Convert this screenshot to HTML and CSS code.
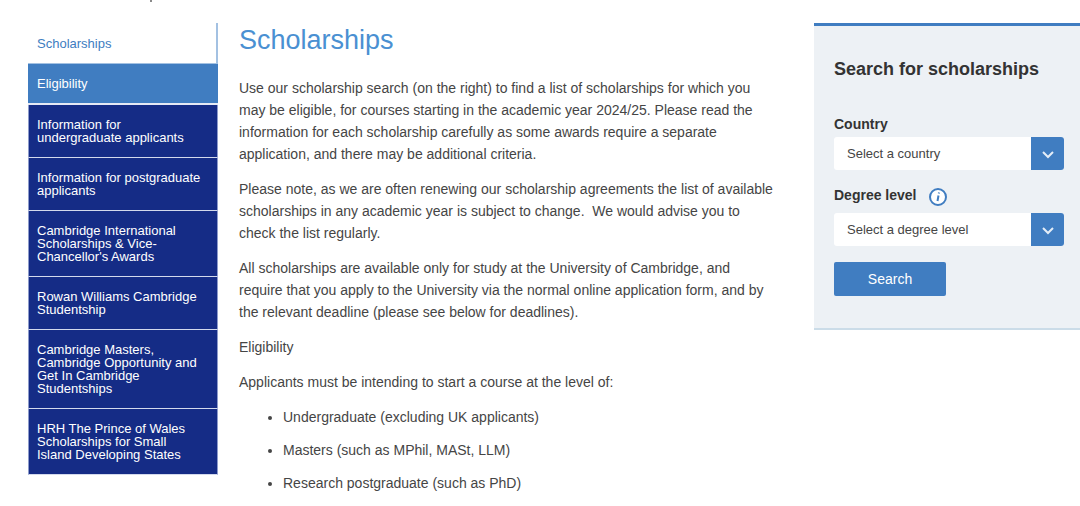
FILE: index.html
```html
<!DOCTYPE html>
<html lang="en">
<head>
  <meta charset="UTF-8">
  <title>Scholarships</title>
  <meta name="viewport" content="width=device-width, initial-scale=1">
  <link rel="stylesheet" href="styles.css">
</head>
<body>
  <div class="topbar"><span class="topbar-mark"></span></div>

  <div class="page">
    <nav class="side-nav">
      <a class="parent" href="#">Scholarships</a>
      <a class="current" href="#">Eligibility</a>
      <a href="#">Information for undergraduate applicants</a>
      <a href="#">Information for postgraduate applicants</a>
      <a href="#">Cambridge International Scholarships &amp; Vice-Chancellor's Awards</a>
      <a href="#">Rowan Williams Cambridge Studentship</a>
      <a href="#">Cambridge Masters, Cambridge Opportunity and Get In Cambridge Studentships</a>
      <a href="#">HRH The Prince of Wales Scholarships for Small Island Developing States</a>
    </nav>

    <main class="content">
      <h1>Scholarships</h1>
      <p>Use our scholarship search (on the right) to find a list of scholarships for which you may be eligible, for courses starting in the academic year 2024/25. Please read the information for each scholarship carefully as some awards require a separate application, and there may be additional criteria.</p>
      <p>Please note, as we are often renewing our scholarship agreements the list of available scholarships in any academic year is subject to change.&nbsp; We would advise you to check the list regularly.</p>
      <p>All scholarships are available only for study at the University of Cambridge, and require that you apply to the University via the normal online application form, and by the relevant deadline (please see below for deadlines).</p>
      <p>Eligibility</p>
      <p>Applicants must be intending to start a course at the level of:</p>
      <ul>
        <li>Undergraduate (excluding UK applicants)</li>
        <li>Masters (such as MPhil, MASt, LLM)</li>
        <li>Research postgraduate (such as PhD)</li>
      </ul>
    </main>

    <aside class="search">
      <h2>Search for scholarships</h2>
      <form>
        <div class="label-row">
          <label for="country">Country</label>
        </div>
        <div class="select">
          <select id="country">
            <option>Select a country</option>
          </select>
          <span class="arrow">
            <svg width="14" height="10" viewBox="0 0 14 10"><path d="M2 3l5 5 5-5"/></svg>
          </span>
        </div>

        <div class="label-row">
          <label for="degree">Degree level</label>
          <svg class="info" width="18" height="18" viewBox="0 0 18 18">
            <circle cx="9" cy="9" r="8"/>
            <path d="M9.5 7.500L8.500 13M10 4.500l-.2 1"/>
          </svg>
        </div>
        <div class="select">
          <select id="degree">
            <option>Select a degree level</option>
          </select>
          <span class="arrow">
            <svg width="14" height="10" viewBox="0 0 14 10"><path d="M2 3l5 5 5-5"/></svg>
          </span>
        </div>

        <button type="submit">Search</button>
      </form>
    </aside>
  </div>
</body>
</html>
```

FILE: styles.css
```css
:root {
  --blue: #407dc1;
  --navy: #152c86;
  --pale: #edf1f5;
  --text: #454545;
}

* { box-sizing: border-box; }

body {
  margin: 0;
  font-family: "Liberation Sans", Arial, sans-serif;
  font-size: 14px;
  line-height: 22px;
  color: var(--text);
  background: #fff;
}

.topbar {
  height: 23px;
  padding-left: 150px;
}

.topbar-mark {
  display: block;
  width: 2px;
  height: 2px;
  background: #8a8a8a;
}

.page {
  display: grid;
  grid-template-columns: 190px 1fr 266px;
  column-gap: 21px;
  align-items: start;
  padding-left: 28px;
}

/* side navigation */
.side-nav a {
  display: block;
  padding: 13px 14px 13px 8px;
  border: 1px solid #8d9bcb;
  border-width: 0 1px 1px;
  border-bottom-color: #d3d9ec;
  background: var(--navy);
  color: #fff;
  font-size: 13px;
  line-height: 13px;
  text-decoration: none;
}

.side-nav .parent {
  padding: 14px 9px 13px;
  border-color: #a3c1e2;
  border-width: 0 2px 0 0;
  background: #fff;
  color: var(--blue);
}

.side-nav .current {
  padding: 13px 9px;
  border-color: #e6eaf5;
  border-width: 1px 0 2px;
  border-top-color: #a3c1e2;
  background: var(--blue);
}

/* main text */
.content {
  padding-right: 17px;
}

h1 {
  margin: 0 0 20px;
  font-size: 27px;
  line-height: 34px;
  font-weight: normal;
  color: #4a90d2;
}

.content p {
  margin: 0 0 13px;
}

.content ul {
  margin: 0;
  padding-left: 44px;
}

.content li {
  margin-top: 11px;
}

/* search panel */
.search {
  padding: 31px 16px 32px 20px;
  border-top: 3px solid var(--blue);
  border-bottom: 2px solid #cbdce8;
  background: var(--pale);
}

h2 {
  margin: 0 0 32px;
  font-size: 18px;
  line-height: 24px;
  color: #333;
}

.label-row {
  display: flex;
  align-items: flex-start;
  gap: 12px;
  min-height: 24px;
  font-weight: bold;
  color: #333;
}

.info {
  margin: 4px 0 7px;
  fill: #fff;
  stroke: var(--blue);
  stroke-width: 2;
}

.select {
  display: grid;
  grid-template-columns: 1fr 33px;
  height: 33px;
  margin-bottom: 14px;
}

.select select {
  grid-area: 1 / 1 / 2 / 3;
  width: 100%;
  padding: 0 40px 0 13px;
  border: 0;
  border-radius: 3px;
  background: #fff;
  color: var(--text);
  font-family: inherit;
  font-size: 13px;
  appearance: none;
}

.arrow {
  grid-area: 1 / 2 / 2 / 3;
  display: flex;
  align-items: center;
  justify-content: center;
  border-radius: 0 3px 3px 0;
  background: var(--blue);
  pointer-events: none;
}

.arrow path {
  fill: none;
  stroke: #e4edf7;
  stroke-width: 2;
}

button {
  width: 112px;
  height: 34px;
  margin-top: 2px;
  border: 0;
  border-radius: 2px;
  background: var(--blue);
  color: #fff;
  font-family: inherit;
  font-size: 14px;
}
```
